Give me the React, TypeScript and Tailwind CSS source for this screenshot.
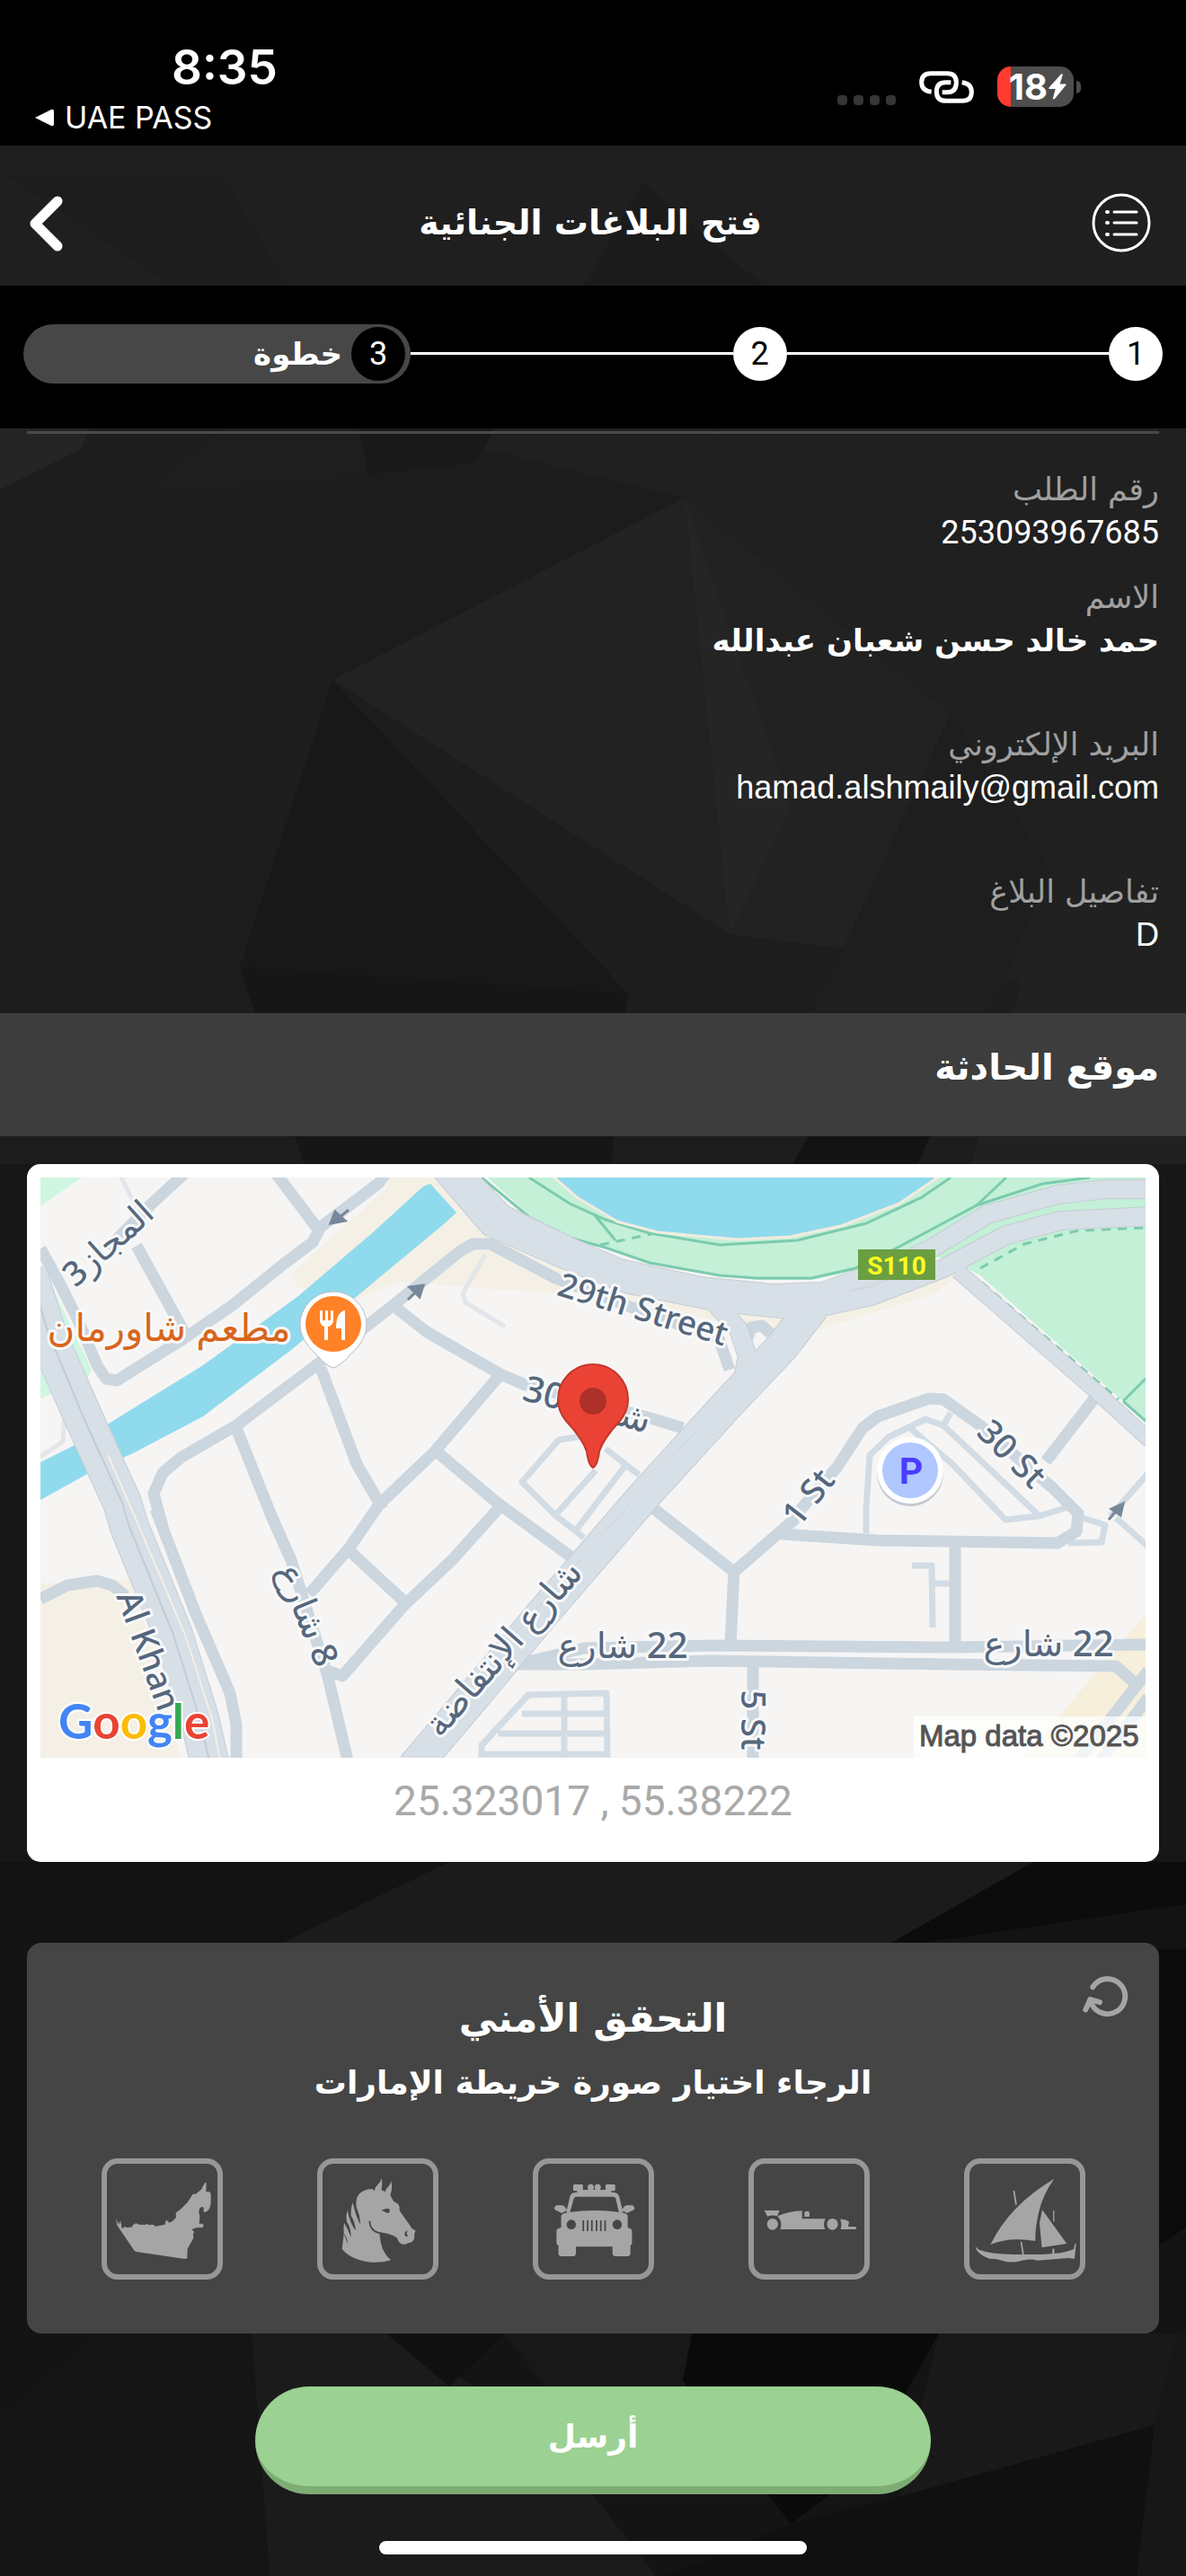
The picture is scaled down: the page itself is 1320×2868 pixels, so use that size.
import React from "react";

const arabic = "font-['DejaVu_Sans',sans-serif]";

/* ---------- Low-poly backdrop ---------- */

const facets: [string, string][] = [
  ["0,162 1320,162 1320,318 0,318", "#1f1f1f"],
  ["715,204 850,318 650,318", "#1b1b1b"],
  ["0,190 245,190 320,318 190,318", "#1d1d1d"],
  ["0,477 100,477 90,500 0,545", "#242424"],
  ["250,477 400,477 410,528 160,550", "#1e1e1e"],
  ["400,477 550,477 530,515 410,528", "#191919"],
  ["550,477 800,477 762,554 540,500", "#202020"],
  ["800,477 1320,477 1320,1128 939,1056 1058,795 762,554", "#202020"],
  ["410,528 530,515 762,554 370,757", "#1c1c1c"],
  ["762,554 370,757 812,1040", "#222222"],
  ["762,554 1058,795 939,1056 812,1040", "#222222"],
  ["762,554 880,900 812,1040", "#252525"],
  ["370,757 267,1077 699,1106", "#181818"],
  ["370,757 699,1106 812,1040", "#1d1d1d"],
  ["267,1077 699,1106 680,1300 340,1300", "#161616"],
  ["939,1056 1058,795 1170,970 1100,1128 900,1128", "#1e1e1e"],
  ["1170,970 1320,880 1320,1300 1080,1300", "#212121"],
  ["900,1265 1035,1265 1020,1300 880,1300", "#131313"],
  ["0,1296 1320,1296 1320,2170 0,2170", "#171717"],
  ["0,2073 1320,2073 1320,2170 0,2170", "#131313"],
  ["500,2073 1150,2073 980,2170 300,2170", "#1b1b1b"],
  ["1150,2073 1320,2073 1320,2120 980,2170", "#0c0c0c"],
  ["0,2170 1320,2170 1320,2868 0,2868", "#141414"],
  ["1290,2170 1320,2170 1320,2480 1290,2500", "#0b0b0b"],
  ["280,2598 430,2598 600,2700 730,2868 300,2868", "#1b1b1b"],
  ["430,2598 560,2598 500,2657", "#101010"],
  ["560,2598 770,2598 760,2700 640,2700", "#181818"],
  ["770,2598 1045,2598 960,2750 880,2810 760,2650", "#0a0a0a"],
  ["1045,2598 1310,2598 1285,2700 1000,2780", "#191919"],
  ["1285,2700 1265,2868 740,2868 880,2810 1000,2780", "#101010"],
  ["1310,2598 1320,2598 1320,2868 1265,2868 1285,2700", "#171717"],
  ["0,2690 110,2598 280,2598 300,2868 0,2868", "#151515"],
];

function Backdrop() {
  return (
    <svg
      className="absolute inset-0 size-full"
      viewBox="0 0 1320 2868"
      preserveAspectRatio="none"
      aria-hidden="true"
    >
      {facets.map(([points, fill]) => (
        <polygon key={points} points={points} fill={fill} />
      ))}
    </svg>
  );
}

/* ---------- Status bar ---------- */

function StatusBar() {
  return (
    <div className="relative flex h-[162px] items-start justify-between bg-black pr-[117px] pl-[38px] font-['Inter',sans-serif] text-white">
      <div className="pt-[43px]">
        <div className="pl-[153px] text-[53px] leading-[64px] font-semibold">8:35</div>
        <div className="flex items-center gap-3 text-[34px] leading-[48px]">
          <svg className="h-5 w-[22px]" viewBox="0 0 22 20" fill="currentColor" aria-hidden="true">
            <path d="M1 10 L19 1 Q22 0 22 3 V17 Q22 20 19 19 Z" />
          </svg>
          <span>UAE PASS</span>
        </div>
      </div>
      <div className="flex items-center gap-[26px] pt-[74px]">
        <div className="mb-[2px] flex gap-[7px] self-end">
          {[0, 1, 2, 3].map((i) => (
            <span key={i} className="size-[11px] rounded-[4px] bg-[#363636]" />
          ))}
        </div>
        <svg className="h-9 w-[61px]" viewBox="309 60 183 108" fill="none" stroke="#fff" strokeWidth="15" aria-hidden="true">
          <path d="M350 130 Q317 126 317 98 Q317 68 348 68 H403 Q433 68 433 98 Q433 131 403 131 H386" />
          <path d="M415 98 H398 Q367 98 367 129 Q367 160 398 160 H454 Q484 160 484 130 Q484 102 452 98" />
        </svg>
        <div className="flex items-center gap-[3px]">
          <div className="flex h-[45px] w-[85px] items-center justify-end gap-px rounded-[15px] bg-[linear-gradient(to_right,#ff3b30_18%,#4d4d4d_18%)] pr-2 text-[40px] font-bold">
            <span>18</span>
            <svg className="h-[29px] w-5" viewBox="740 66 62 88" fill="currentColor" aria-hidden="true">
              <path d="M784 66 L741 114 Q740 118 745 118 H764 L755 150 Q757 156 762 151 L801 104 Q802 101 798 101 H779 L789 70 Q788 65 784 66Z" />
            </svg>
          </div>
          <span className="h-[14px] w-[5px] rounded-r-full bg-[#4d4d4d]" />
        </div>
      </div>
    </div>
  );
}

/* ---------- Title bar and steps ---------- */

function TitleBar() {
  return (
    <header className="relative flex h-[156px] items-center justify-between pt-4 pr-[39px] pl-[33px] text-white">
      <button type="button" aria-label="رجوع">
        <svg className="h-16 w-[66px]" viewBox="0 0 66 64" fill="none" stroke="currentColor" strokeWidth="11" strokeLinecap="round" strokeLinejoin="round" aria-hidden="true">
          <path d="M31 8 L6 33 L31 58" />
        </svg>
      </button>
      <h1 className={`${arabic} text-[38px] leading-[56px] font-bold`}>فتح البلاغات الجنائية</h1>
      <button type="button" aria-label="القائمة">
        <svg className="size-[66px]" viewBox="0 0 66 66" fill="none" stroke="currentColor" strokeWidth="3" strokeLinecap="round" aria-hidden="true">
          <circle cx="33" cy="33" r="31" strokeWidth="3" />
          <path d="M25 21 H50 M25 33 H50 M25 46 H50" />
          <path d="M17 21 h1 M17 33 h1 M17 46 h1" strokeWidth="4" />
        </svg>
      </button>
    </header>
  );
}

function Steps() {
  return (
    <ol dir="rtl" className="relative flex h-[159px] items-center bg-black px-[26px] pb-2 font-['Roboto',sans-serif] text-[36px] leading-none">
      <li className="flex size-[60px] items-center justify-center rounded-full bg-white text-black">1</li>
      <li aria-hidden="true" className="h-[3px] flex-1 bg-white" />
      <li className="flex size-[60px] items-center justify-center rounded-full bg-white text-black">2</li>
      <li aria-hidden="true" className="h-[3px] flex-1 bg-white" />
      <li aria-current="step" className="flex h-[66px] w-[34%] items-center gap-[10px] rounded-full bg-[#474747] pr-[6px] text-white">
        <span className="flex size-[60px] items-center justify-center rounded-full bg-black">3</span>
        <span className={`${arabic} text-[34px] leading-[48px] font-bold`}>خطوة</span>
      </li>
    </ol>
  );
}

/* ---------- Request details ---------- */

type Detail = { label: string; value: string; style: string };

const details: Detail[] = [
  { label: "رقم الطلب", value: "253093967685", style: "mt-0 text-[36px] font-['Roboto',sans-serif]" },
  { label: "الاسم", value: "حمد خالد حسن شعبان عبدالله", style: "mt-6 text-[34px] font-bold font-['DejaVu_Sans',sans-serif]" },
  { label: "البريد الإلكتروني", value: "hamad.alshmaily@gmail.com", style: "mt-[68px] text-[36px] font-['Liberation_Sans',sans-serif]" },
  { label: "تفاصيل البلاغ", value: "D", style: "mt-[68px] text-[36px] font-['Liberation_Sans',sans-serif]" },
];

function Details() {
  return (
    <section dir="rtl" className="relative px-[30px] pt-[3px] pb-[63px]">
      <hr className="border-t-[3px] border-[#4a4a4a]" />
      <dl className="pt-[38px]">
        {details.map(({ label, value, style }) => (
          <div key={label} className={style}>
            <dt className="font-['DejaVu_Sans',sans-serif] text-[35px] leading-[48px] font-normal text-[#a0a0a0]">{label}</dt>
            <dd className="leading-[48px] text-white">
              <bdi>{value}</bdi>
            </dd>
          </div>
        ))}
      </dl>
    </section>
  );
}

/* ---------- Map ---------- */

const streets = [
  "45,1390 67,1430 87,1470 108,1520 118,1535 130,1537 205,1490 259,1453 316,1407 348,1383 357,1366 422,1317 430,1305",
  "352,1366 306,1305",
  "207,1487 152,1387",
  "207,1305 169,1340 120,1390",
  "173,1680 218,1797 256,1885 263,1920 263,1960",
  "181,1700 171,1663 181,1640 201,1623 263,1587 352,1520 438,1453 512,1393 526,1385 546,1385 618,1423 720,1462 800,1490 812,1525",
  "442,1457 475,1483 557,1530 585,1542 728,1580 760,1590",
  "557,1530 483,1617 422,1675 389,1723 344,1775",
  "357,1523 397,1630 426,1680",
  "263,1590 303,1690 324,1737 365,1867 387,1960",
  "365,1860 381,1866 450,1787 503,1737 557,1677",
  "385,1723 452,1785",
  "487,1617 552,1672 638,1735",
  "883,1690 932,1633 960,1590 977,1577 1034,1557 1050,1558 1091,1587 1172,1657 1200,1685 1198,1705 1177,1718 977,1715 870,1708",
  "886,1690 817,1750 728,1680",
  "817,1748 813,1832",
  "1063,1718 1063,1833",
  "575,1853 650,1835 793,1832 1058,1834 1280,1831",
  "575,1853 650,1853 793,1849 1058,1853 1242,1855 1262,1873",
  "838,1853 838,1960",
  "1221,1553 1164,1627",
  "45,1780 75,1765 108,1760 125,1765 140,1777",
  "1278,1860 1200,1960",
  "1278,1890 1225,1960",
  "832,1490 836,1478 848,1476 860,1487 862,1500",
];

const lanes = [
  "663,1597 642,1600 622,1603 581,1650 618,1687 650,1712",
  "663,1637 618,1687",
  "674,1613 711,1642",
  "695,1633 640,1705",
  "964,1707 964,1680 968,1620 989,1600 1030,1580 1050,1587 1156,1687",
  "1058,1573 1050,1587",
  "1013,1590 1060,1630 1119,1692 1156,1688 1189,1678",
  "1205,1690 1230,1698 1226,1717 1189,1718",
  "1278,1640 1236,1688",
  "1242,1690 1278,1722",
  "1015,1743 1037,1743 1038,1812",
  "1038,1763 1058,1763",
  "536,1957 536,1943 588,1887 675,1885 676,1957",
  "581,1908 675,1908",
  "554,1930 675,1930",
  "536,1953 675,1953",
  "628,1887 628,1957",
];

const footways = ["132,1305 152,1345", "540,1397 515,1440 518,1450 562,1477", "72,1570 70,1605 45,1622"];

const highways: { points: string; width: number }[] = [
  { points: "508,1298 560,1352 634,1388 690,1412 780,1432 860,1440 915,1438 1000,1408 1040,1388 1099,1352 1177,1330 1230,1324 1280,1324", width: 20 },
  { points: "488,1300 545,1366 634,1405 700,1430 800,1450 870,1457 915,1455 970,1443 1050,1412 1120,1375 1180,1359 1280,1354", width: 20 },
  { points: "30,1415 54,1490 95,1583 136,1673 144,1700 193,1820 222,1913 234,1965", width: 42 },
  { points: "905,1455 870,1500 813,1560 719,1663 601,1800 520,1897 460,1968", width: 36 },
  { points: "795,1450 822,1480 832,1510 825,1545", width: 20 },
  { points: "1066,1415 1221,1550 1280,1604", width: 16 },
];

type MapLabel = { text: string; x: number; y: number; angle: number; size: number; rtl: boolean };

const mapLabels: MapLabel[] = [
  { text: "المجاز3", x: 129, y: 1394, angle: -42, size: 38, rtl: true },
  { text: "29th Street", x: 712, y: 1470, angle: 17, size: 37, rtl: false },
  { text: "شارع 30", x: 650, y: 1577, angle: 15, size: 40, rtl: true },
  { text: "1 St", x: 910, y: 1675, angle: -52, size: 38, rtl: false },
  { text: "30 St", x: 1117, y: 1628, angle: 45, size: 38, rtl: false },
  { text: "Al Khan", x: 153, y: 1842, angle: 70, size: 38, rtl: false },
  { text: "5 St", x: 825, y: 1915, angle: 90, size: 38, rtl: false },
  { text: "22 شارع", x: 693, y: 1846, angle: 0, size: 40, rtl: true },
  { text: "22 شارع", x: 1167, y: 1844, angle: 0, size: 40, rtl: true },
  { text: "8 شارع", x: 330, y: 1803, angle: 68, size: 39, rtl: true },
  { text: "شارع الإنتفاضة", x: 570, y: 1844, angle: -49, size: 40, rtl: true },
];

const googleLetters: [string, string][] = [
  ["G", "#4285f4"],
  ["o", "#ea4335"],
  ["o", "#fbbc05"],
  ["g", "#4285f4"],
  ["l", "#34a853"],
  ["e", "#ea4335"],
];

function IncidentMap() {
  return (
    <svg className="block h-auto w-full" viewBox="45 1311 1230 646" role="img" aria-label="موقع الحادثة">
      <rect x="45" y="1311" width="1230" height="646" fill="#f6f5f4" />
      <g fill="#f4f0e5">
        <path d="M322 1420 L430 1323 L432 1311 H500 L640 1425 L618 1440 L520 1433 L446 1427 L397 1447 L332 1433Z" />
        <path d="M640 1410 L813 1440 L1080 1410 L1042 1440 L907 1482 L862 1490 L830 1477 L700 1450Z" />
        <path d="M45 1763 L148 1758 L152 1777 L201 1957 H45Z" />
      </g>
      <path d="M1275 1797 L1140 1957 H1275Z" fill="#f6efdc" />
      <g fill="#cff6e0">
        <path d="M45 1311 H91 L45 1343Z" />
        <path d="M45 1410 L52 1420 L102 1525 L94 1540 L45 1437Z" />
        <path d="M45 1500 L61 1550 L45 1557Z" />
      </g>
      <path
        d="M536 1305 L589 1353 L634 1377 L674 1387 L723 1405 L801 1420 L842 1425 L903 1425 L952 1415 L1000 1400 L1054 1400 L1091 1420 L1250 1560 L1275 1585 V1305Z"
        fill="#c3f0d7"
      />
      <g fill="none" stroke="#7ccbae" strokeWidth="3">
        <path d="M589 1311 L634 1340 L674 1358 L723 1373 L801 1386 L887 1381 L964 1362 L1026 1333 L1058 1311" />
        <path d="M536 1311 L589 1355 L634 1378 L674 1389 L723 1406 L801 1420 L842 1423 L903 1423 L952 1412 L997 1390 L1087 1342 L1160 1318 L1213 1311" />
        <path d="M662 1353 L685 1381 M1087 1342 L1120 1311 M1250 1560 L1275 1535 M1250 1560 L1275 1582" />
        <path d="M1091 1412 L1140 1385 L1200 1370 L1275 1367 M1093 1428 L1245 1558 M668 1386 L725 1374" strokeDasharray="10 8" />
      </g>
      <path
        d="M610 1305 L642 1333 L687 1360 L732 1372 L821 1380 L879 1377 L936 1365 L1001 1340 L1052 1305Z"
        fill="#90daed"
        stroke="#f1ece0"
        strokeWidth="3"
      />
      <path
        d="M479 1318 L508 1350 L495 1362 L401 1440 L324 1503 L226 1577 L148 1618 L99 1640 L45 1670 V1628 L87 1607 L124 1583 L226 1520 L332 1443 L414 1373 L471 1321Z"
        fill="#90daed"
      />
      <g fill="none" strokeLinejoin="round">
        {footways.map((points) => (
          <polyline key={points} points={points} stroke="#e2e6ea" strokeWidth="5" />
        ))}
        {lanes.map((points) => (
          <polyline key={points} points={points} stroke="#d2dce5" strokeWidth="7" />
        ))}
        {streets.map((points) => (
          <polyline key={points} points={points} stroke="#cbd6df" strokeWidth="13" />
        ))}
        {highways.map(({ points, width }) => (
          <polyline key={points} points={points} stroke="#c5cdd5" strokeWidth={width + 2} />
        ))}
        {highways.map(({ points, width }) => (
          <polyline key={points} points={points} stroke="#d7dfe7" strokeWidth={width} />
        ))}
        <polyline points="30,1405 54,1485 95,1583 136,1673 144,1700 193,1820 222,1913 234,1965" stroke="#c3cbd3" strokeWidth="2" />
        <polyline points="120,1620 155,1700 206,1820 236,1913 246,1965" stroke="#f4f0e5" strokeWidth="2" />
        <polyline points="800,1565 706,1669 590,1800 509,1897" stroke="#cdd5dd" strokeWidth="1" />
      </g>
      <g fill="#78879a" stroke="#78879a" strokeWidth="3">
        <path d="M368 1362 L384 1359 L373 1349Z M377 1356 L388 1347" />
        <path d="M471 1431 L456 1433 L467 1444Z M463 1438 L454 1447" />
        <path d="M1250 1674 L1237 1680 L1247 1687Z M1242 1682 L1234 1692" />
      </g>

      <g
        fontFamily="'Noto Sans', 'DejaVu Sans', sans-serif"
        fontWeight="500"
        fill="#56677c"
        stroke="#f8f9fa"
        strokeWidth="6"
        strokeLinejoin="round"
        paintOrder="stroke"
        textAnchor="middle"
      >
        {mapLabels.map(({ text, x, y, angle, size, rtl }) => (
          <text
            key={`${text}-${x}`}
            x={x}
            y={y}
            fontSize={size}
            direction={rtl ? "rtl" : "ltr"}
            transform={`rotate(${angle} ${x} ${y})`}
          >
            {text}
          </text>
        ))}
        <text x="188" y="1493" fontSize="42" direction="rtl" fill="#d9651b">
          مطعم شاورمان
        </text>
      </g>

      <path d="M371 1523 Q362 1520 352 1508 Q334 1492 334 1475 A37 37 0 0 1 408 1475 Q408 1492 390 1508 Q380 1520 371 1523Z" fill="#fff" stroke="#b9bec5" strokeWidth="1" />
      <circle cx="371" cy="1474" r="31" fill="#ff8226" />
      <path d="M356 1459 V1471 Q357 1476 361 1477 V1492 H365 V1477 Q370 1476 371 1471 V1459 H368 V1470 H365 V1459 H362 V1470 H359 V1459Z M383 1459 Q374 1462 374 1479 H380 V1492 H384 V1459Z" fill="#fff" />

      <path d="M660 1634 Q655 1632 653 1616 Q648 1601 630 1582 Q621 1571 621 1558 A39 39 0 0 1 699 1558 Q699 1571 690 1582 Q672 1601 667 1616 Q665 1632 660 1634Z" fill="#ea4335" stroke="#c5372b" strokeWidth="2" />
      <circle cx="660" cy="1560" r="15" fill="#ad3128" />

      <circle cx="1013" cy="1640" r="37" fill="#c4cad2" />
      <circle cx="1013" cy="1637" r="37" fill="#fff" />
      <circle cx="1013" cy="1637" r="31" fill="#b0c7ff" />
      <text x="1014" y="1652" fontSize="41" fontWeight="700" fill="#4b3cff" textAnchor="middle" fontFamily="Roboto, sans-serif">
        P
      </text>

      <rect x="955" y="1391" width="86" height="34" fill="#6b9e41" />
      <text x="998" y="1419" fontSize="28" fontWeight="700" fill="#fcff1f" textAnchor="middle" fontFamily="Roboto, sans-serif">
        S110
      </text>

      <text x="65" y="1936" fontSize="53" fontWeight="700" stroke="#fff" strokeWidth="4" paintOrder="stroke" fontFamily="Lato, sans-serif">
        {googleLetters.map(([letter, fill], i) => (
          <tspan key={i} fill={fill}>
            {letter}
          </tspan>
        ))}
      </text>

      <rect x="1017" y="1911" width="258" height="46" fill="#fff" fillOpacity="0.75" />
      <text x="1023" y="1944" fontSize="33" fill="#555" stroke="#555" strokeWidth="1" fontFamily="'Liberation Sans', sans-serif">
        Map data ©2025
      </text>
    </svg>
  );
}

/* ---------- Picture check ---------- */

const ink = "#a5a5a5";
const cut = "#454545";

const MapOutline = (
  <path
    fill={ink}
    d="M148 266 L151 280 L156 291 L157 279 L161 289 L164 276 L166 300 L171 304 L174 297 L183 300 L199 299 L205 290 L214 286 L224 290 L246 291 L251 287 L257 292 L271 290 L279 296 L311 290 L314 276 L321 278 L324 284 L336 279 L348 266 L347 251 L365 237 L387 215 L404 188 L412 189 L432 173 L443 152 Q446 148 449 151 L448 181 Q462 177 464 190 L464 218 Q461 245 443 249 Q437 246 440 240 Q443 232 433 231 Q424 235 424 250 L427 262 L425 287 L437 287 Q442 295 436 300 L415 301 L400 307 L409 315 L405 320 L406 335 L386 372 L385 403 L378 405 L215 381 L209 378 L150 291Z"
  />
);

const Horse = (
  <g fill={ink}>
    <path d="M1003 171 L1010 178 Q1012 164 1022 156 Q1031 148 1034 136 Q1038 158 1033 174 L1046 181 Q1050 168 1058 162 Q1065 154 1066 144 Q1072 170 1063 192 L1074 212 L1090 222 Q1096 230 1094 244 L1128 292 L1136 304 L1148 311 Q1141 320 1144 335 Q1138 352 1122 352 Q1107 362 1094 350 Q1086 340 1087 335 Q1060 318 1027 316 Q1030 360 1042 380 Q1050 396 1065 409 Q1010 426 950 405 Q922 395 902 372 L908 322 Q915 335 920 355 Q922 336 908 320 Q906 300 909 284 Q925 310 932 334 Q932 300 917 280 Q915 258 920 242 Q930 290 948 310 Q945 280 932 260 Q931 232 938 217 Q950 270 964 290 Q962 260 950 232 Q942 175 1003 171Z" />
    <path d="M994 278 Q996 315 1032 319" fill="none" stroke={cut} strokeWidth="5" />
    <path d="M1034 243 Q1048 234 1060 238 Q1064 250 1054 252 Q1045 248 1034 243Z" fill={cut} />
    <path d="M1122 310 Q1108 314 1112 326 Q1116 334 1122 328 Q1114 320 1122 310Z" fill={cut} />
  </g>
);

const Jeep = (
  <g fill={ink}>
    <rect x="180" y="156" width="25" height="22" rx="4" />
    <rect x="263" y="156" width="25" height="22" rx="4" />
    <ellipse cx="225" cy="166" rx="8" ry="11" />
    <ellipse cx="243" cy="166" rx="8" ry="11" />
    <rect x="190" y="174" width="88" height="14" />
    <path d="M171 252 L162 250 L171 200 Q173 184 185 183 H285 Q296 184 299 200 L308 250 L298 252 L289 202 Q288 197 283 197 H188 Q183 197 182 202Z" />
    <path d="M132 240 Q130 226 140 226 L152 226 Q160 230 164 243 L150 252 Q142 246 132 240Z" />
    <path d="M337 240 Q339 226 329 226 L317 226 Q309 230 305 243 L319 252 Q327 246 337 240Z" />
    <path d="M149 262 Q150 252 170 249 Q200 243 234 243 Q270 243 300 249 Q320 252 320 262 V300 Q331 305 331 312 V350 Q331 358 327 360 V386 Q327 396 317 396 H292 Q281 396 281 386 V364 H187 V386 Q187 396 177 396 H152 Q142 396 142 386 V360 Q137 358 137 350 V312 Q137 303 149 300Z" />
    <g fill={cut}>
      <ellipse cx="175" cy="290" rx="12" ry="16" />
      <ellipse cx="293" cy="290" rx="12" ry="16" />
      {[204, 215, 226, 238, 249, 260].map((x) => (
        <rect key={x} x={x} y="276" width="4" height="36" />
      ))}
    </g>
  </g>
);

const RaceCar = (
  <g fill={ink}>
    <path d="M670 243 H709 L703 262 Q690 257 678 263Z" />
    <ellipse cx="691" cy="289" rx="14" ry="19" />
    <path d="M704 262 Q735 245 767 244 V271 H827 Q820 288 826 306 H711 Q718 282 704 262Z" />
    <path d="M773 264 V251 Q773 245 779 245 Q786 245 786 252 V264Z" />
    <ellipse cx="845" cy="289" rx="14" ry="19" />
    <path d="M865 272 Q880 272 888 281 L885 297 L906 298 V306 H866 Q870 290 865 272Z" />
  </g>
);

const Dhow = (
  <g fill={ink}>
    <path d="M1415 137 Q1385 190 1375 250 Q1366 300 1366 345 Q1300 330 1251 357 Q1300 225 1415 137Z" />
    <path d="M1384 241 L1447 354 L1383 367 L1377 285Z" />
    <path d="M1309 177 H1313 L1319 223 L1315 226Z" />
    <path d="M1328 348 H1332 L1337 390 H1333Z" />
    <rect x="1412" y="243" width="3" height="38" />
    <rect x="1410" y="371" width="5" height="18" />
    <path d="M1212 365 Q1217 366 1221 374 Q1250 388 1310 390 H1380 Q1440 388 1465 372 L1468 354 H1471 L1467 404 L1450 402 L1372 410 Q1350 402 1330 411 Q1305 420 1282 411 Q1265 403 1248 404 Q1218 390 1212 365Z" />
  </g>
);

const choices = [
  { name: "سفينة", viewBox: "1197 87 284 369", art: Dhow },
  { name: "سيارة سباق", viewBox: "643 87 284 369", art: RaceCar },
  { name: "سيارة", viewBox: "90 87 284 369", art: Jeep },
  { name: "حصان", viewBox: "837 87 369 369", art: Horse },
  { name: "خريطة الإمارات", viewBox: "117 87 369 369", art: MapOutline },
];

function SecurityCheck() {
  return (
    <section dir="rtl" className="relative mt-[90px] rounded-[16px] bg-[#454545] px-[30px] pt-12 pb-[60px] text-center text-white">
      <button type="button" aria-label="تحديث" className="absolute top-[37px] right-[33px]">
        <svg className="h-12 w-[53px]" viewBox="40 30 160 145" fill="none" stroke={ink} strokeWidth="18" strokeLinecap="round" strokeLinejoin="round" aria-hidden="true">
          <path d="M77 67 A59 59 0 1 1 71 118" />
          <path d="M53 143 L68 109 L100 118" />
        </svg>
      </button>
      <h2 className={`${arabic} text-[43px] leading-[72px] font-bold`}>التحقق الأمني</h2>
      <p className={`${arabic} text-[36px] leading-[72px] font-bold`}>الرجاء اختيار صورة خريطة الإمارات</p>
      <div className="mt-12 grid grid-cols-5 justify-items-center">
        {choices.map(({ name, viewBox, art }) => (
          <button key={name} type="button" aria-label={name} className="size-[135px] rounded-[18px] border-[6px] border-[#979797]">
            <svg className="size-full" viewBox={viewBox} preserveAspectRatio="none" aria-hidden="true">
              {art}
            </svg>
          </button>
        ))}
      </div>
    </section>
  );
}

/* ---------- Page ---------- */

export default function App() {
  return (
    <div className="relative min-h-screen bg-[#1d1d1d]">
      <Backdrop />
      <StatusBar />
      <TitleBar />
      <Steps />
      <main className="relative">
        <Details />
        <h2 dir="rtl" className={`${arabic} bg-[#3d3d3d] px-[30px] pt-6 pb-[41px] text-[40px] leading-[72px] font-bold text-white`}>
          موقع الحادثة
        </h2>
        <div className="px-[30px] pt-[31px]">
          <figure className="rounded-[15px] bg-white px-[15px] pt-[15px] pb-5">
            <IncidentMap />
            <figcaption className="text-center font-['Roboto',sans-serif] text-[46px] leading-[96px] text-[#a9a9a9]">
              25.323017 , 55.38222
            </figcaption>
          </figure>
          <SecurityCheck />
        </div>
        <div className="flex flex-col items-center pt-[59px] pb-6">
          <button
            type="button"
            className={`${arabic} h-[120px] w-[57%] rounded-full border-b-[9px] border-[#7dac75] bg-[#9bd192] text-[36px] leading-[60px] font-bold text-white`}
          >
            أرسل
          </button>
          <span aria-hidden="true" className="mt-[52px] h-[15px] w-[36%] rounded-full bg-white" />
        </div>
      </main>
    </div>
  );
}
